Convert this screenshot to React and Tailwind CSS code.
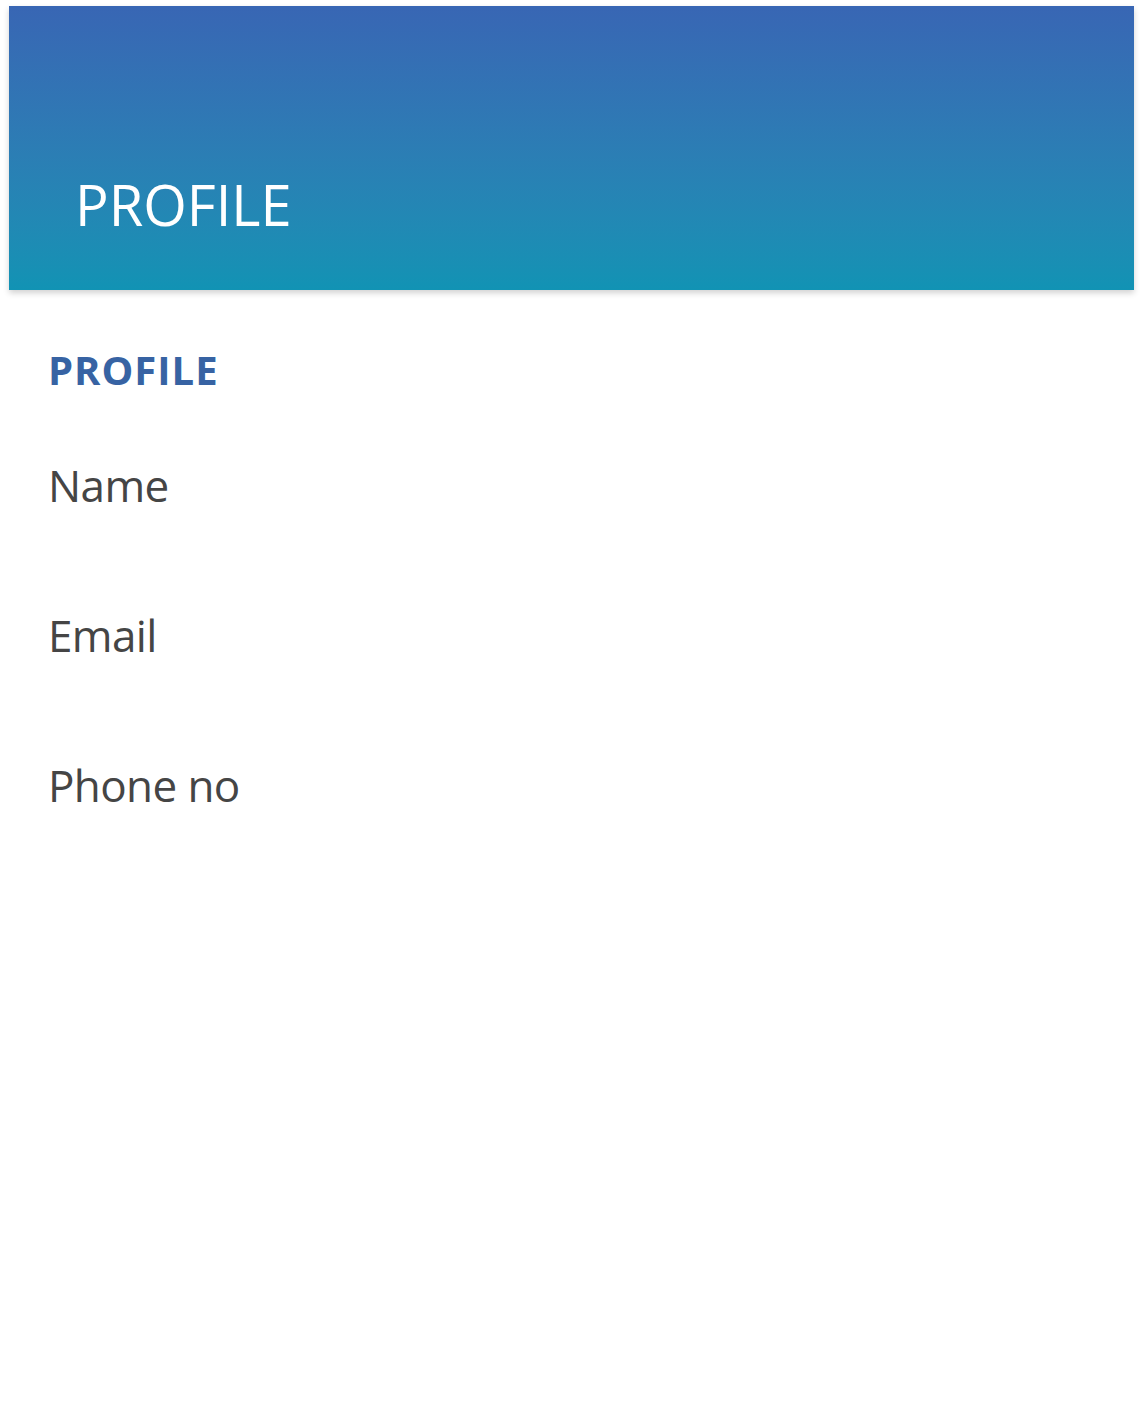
import React from 'react';

const fields = ['Name', 'Email', 'Phone no'];

const App = () => {
  return (
    <div className="min-h-[1428px] bg-white pt-[6px] font-['Open_Sans',sans-serif]">
      {/* Header */}
      <header className="mx-[9px] h-[284px] bg-gradient-to-b from-[#3866b4] to-[#1193b4] shadow-[0_3px_6px_rgba(0,0,0,0.18)] flex items-end pl-[66px] pb-[58px]">
        <h1 className="text-white text-[56px] leading-none font-normal">PROFILE</h1>
      </header>

      {/* Content */}
      <main className="px-[48px] pt-[60px]">
        <h2 className="text-[#3763a3] text-[40px] leading-none font-bold tracking-[1px]">PROFILE</h2>
        <div className="mt-[73px] flex flex-col gap-[106px]">
          {fields.map((f) => (
            <p key={f} className="text-[#454545] text-[44px] leading-none tracking-[-0.6px]">
              {f}
            </p>
          ))}
        </div>
      </main>
    </div>
  );
};

export default App;
